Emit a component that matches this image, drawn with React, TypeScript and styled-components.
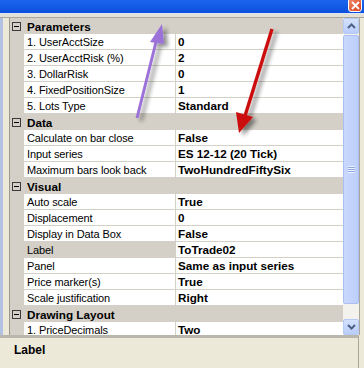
import styled, { createGlobalStyle } from "styled-components";

const GlobalStyle = createGlobalStyle`
	html, body {
		margin: 0;
		padding: 0;
		background: #ece9d8;
	}
	body {
		font-family: "Liberation Sans", Arial, sans-serif;
	}
`;

interface Prop {
	name: string;
	value: string;
	selected?: boolean;
}

interface Category {
	title: string;
	props: Prop[];
}

const categories: Category[] = [
	{
		title: "Parameters",
		props: [
			{ name: "1. UserAcctSize", value: "0" },
			{ name: "2. UserAcctRisk (%)", value: "2" },
			{ name: "3. DollarRisk", value: "0" },
			{ name: "4. FixedPositionSize", value: "1" },
			{ name: "5. Lots Type", value: "Standard" }
		]
	},
	{
		title: "Data",
		props: [
			{ name: "Calculate on bar close", value: "False" },
			{ name: "Input series", value: "ES 12-12 (20 Tick)" },
			{ name: "Maximum bars look back", value: "TwoHundredFiftySix" }
		]
	},
	{
		title: "Visual",
		props: [
			{ name: "Auto scale", value: "True" },
			{ name: "Displacement", value: "0" },
			{ name: "Display in Data Box", value: "False" },
			{ name: "Label", value: "ToTrade02", selected: true },
			{ name: "Panel", value: "Same as input series" },
			{ name: "Price marker(s)", value: "True" },
			{ name: "Scale justification", value: "Right" }
		]
	},
	{
		title: "Drawing Layout",
		props: [{ name: "1. PriceDecimals", value: "Two" }]
	}
];

function App() {
	return (
		<Window>
			<GlobalStyle />
			<TitleBar>
				<CloseButton>
					<svg width="9" height="9" viewBox="0 0 9 9">
						<path d="M1 1 L8 8 M8 1 L1 8" stroke="#fff" strokeWidth="1.8" />
					</svg>
				</CloseButton>
			</TitleBar>
			<TopGap />
			<Content>
				<LeftStrip />
				<Grid>
					{categories.map(cat => (
						<div key={cat.title}>
							<HeaderRow>
								<Gutter>
									<MinusBox />
								</Gutter>
								<HeaderTitle>{cat.title}</HeaderTitle>
							</HeaderRow>
							{cat.props.map(p => (
								<PropRow key={p.name}>
									<Gutter />
									<NameCell selected={!!p.selected}>{p.name}</NameCell>
									<ValueCell>{p.value}</ValueCell>
								</PropRow>
							))}
						</div>
					))}
				</Grid>
				<ScrollBar>
					<ScrollButton>
						<svg width="9" height="6" viewBox="0 0 9 6">
							<path d="M1 5 L4.5 1.5 L8 5" fill="none" stroke="#4d6185" strokeWidth="2" />
						</svg>
					</ScrollButton>
					<Track>
						<Thumb>
							<Grip />
						</Thumb>
					</Track>
					<ScrollButton>
						<svg width="9" height="6" viewBox="0 0 9 6">
							<path d="M1 1 L4.5 4.5 L8 1" fill="none" stroke="#4d6185" strokeWidth="2" />
						</svg>
					</ScrollButton>
				</ScrollBar>
				<RightEdge />
			</Content>
			<Description>
				<DescTitle>Label</DescTitle>
			</Description>
			<Annotations width="364" height="368" viewBox="0 0 364 368">
				<defs>
					<filter id="shadow" x="-50%" y="-50%" width="200%" height="200%">
						<feGaussianBlur in="SourceAlpha" stdDeviation="2" />
						<feOffset dx="4" dy="3" result="off" />
						<feComponentTransfer>
							<feFuncA type="linear" slope="0.45" />
						</feComponentTransfer>
						<feMerge>
							<feMergeNode />
							<feMergeNode in="SourceGraphic" />
						</feMerge>
					</filter>
				</defs>
				<g filter="url(#shadow)">
					<line x1="137" y1="118" x2="157" y2="38" stroke="#9c72d8" strokeWidth="3" />
					<polygon points="162,24 150,42 164,44" fill="#9c72d8" />
				</g>
				<g filter="url(#shadow)">
					<line x1="272" y1="29" x2="245" y2="116" stroke="#cc1010" strokeWidth="3.4" />
					<polygon points="239,133 236,112 253,117" fill="#cc1010" />
				</g>
			</Annotations>
		</Window>
	);
}

const Window = styled.div`
	position: relative;
	width: 364px;
	height: 368px;
	overflow: hidden;
	background: #ece9d8;
	display: flex;
	flex-direction: column;
`;

const TitleBar = styled.div`
	height: 13px;
	flex: none;
	background: linear-gradient(#1c64ec, #0a50dc);
	display: flex;
	justify-content: flex-end;
	align-items: flex-end;
	padding-right: 2px;
`;

const CloseButton = styled.div`
	width: 14px;
	height: 14px;
	margin-bottom: 1px;
	box-sizing: border-box;
	border: 1px solid #fff;
	border-radius: 3px;
	background: linear-gradient(135deg, #f08a68, #d8421e);
	display: flex;
	align-items: center;
	justify-content: center;
`;

const TopGap = styled.div`
	height: 5px;
	flex: none;
	box-sizing: border-box;
	border-top: 1px solid #dde6f7;
	border-bottom: 1px solid #a9a79c;
	background: #e3e1d6;
`;

const Content = styled.div`
	height: 317px;
	flex: none;
	display: flex;
`;

const LeftStrip = styled.div`
	width: 10px;
	flex: none;
	box-sizing: border-box;
	border-left: 3px solid #b3c1e2;
	border-right: 1px solid #9a988e;
	background: #ece9d8;
`;

const Grid = styled.div`
	width: 333px;
	flex: none;
	overflow: hidden;
	background: #fff;
`;

const RowBase = styled.div`
	display: grid;
	grid-template-columns: 14px 152px 167px;
	height: 16px;
	line-height: 14px;
	font-size: 11px;
	color: #000;
`;

const HeaderRow = styled(RowBase)`
	background: #d4d0c8;
`;

const PropRow = styled(RowBase)``;

const Gutter = styled.div`
	background: #d4d0c8;
	position: relative;
`;

const MinusBox = styled.div`
	position: absolute;
	left: 2px;
	top: 4px;
	width: 9px;
	height: 9px;
	box-sizing: border-box;
	border: 1px solid #3a3a3a;
	&::after {
		content: "";
		position: absolute;
		left: 1px;
		top: 3px;
		width: 5px;
		height: 1px;
		background: #000;
	}
`;

const HeaderTitle = styled.div`
	grid-column: 2 / 4;
	padding: 2px 0 0 3px;
	font-weight: 700;
	font-size: 11.7px;
	line-height: 14px;
`;

const NameCell = styled.div<{ selected: boolean }>`
	box-sizing: border-box;
	padding: 1px 0 0 3px;
	border-right: 1px solid #d4d0c8;
	border-bottom: 1px solid #d4d0c8;
	background: ${props => (props.selected ? "#d4d0c8" : "#fff")};
	white-space: nowrap;
	overflow: hidden;
	letter-spacing: -0.1px;
`;

const ValueCell = styled.div`
	box-sizing: border-box;
	padding: 1px 0 0 2px;
	border-bottom: 1px solid #d4d0c8;
	font-weight: 700;
	font-size: 11.7px;
	white-space: nowrap;
	overflow: hidden;
`;

const ScrollBar = styled.div`
	width: 16px;
	flex: none;
	display: flex;
	flex-direction: column;
	background: #f3f2ec;
`;

const ScrollButton = styled.div`
	height: 16px;
	flex: none;
	box-sizing: border-box;
	border: 1px solid #b6c8f4;
	border-radius: 2px;
	background: linear-gradient(#d4e1fd, #b9cdfa);
	display: flex;
	align-items: center;
	justify-content: center;
`;

const Track = styled.div`
	flex: 1;
	padding: 1px 0 15px;
	display: flex;
	flex-direction: column;
`;

const Thumb = styled.div`
	flex: 1;
	box-sizing: border-box;
	border: 1px solid #aabff0;
	border-radius: 2px;
	background: linear-gradient(90deg, #c9d8fd, #bccffb);
	display: flex;
	align-items: center;
	justify-content: center;
`;

const Grip = styled.div`
	width: 7px;
	height: 7px;
	background: repeating-linear-gradient(
		#eef3ff 0,
		#eef3ff 1px,
		#8ca6e6 1px,
		#8ca6e6 2px
	);
`;

const RightEdge = styled.div`
	flex: 1;
	box-sizing: border-box;
	border-left: 1px solid #a9a79c;
	background: #ece9d8;
`;

const Description = styled.div`
	flex: 1;
	box-sizing: border-box;
	margin-right: 5px;
	border-top: 3px solid #b9b7ab;
	border-right: 1px solid #a9a79c;
	padding: 6px 0 0 14px;
	background: #ece9d8;
`;

const DescTitle = styled.div`
	font-weight: 700;
	font-size: 12px;
	line-height: 13px;
`;

const Annotations = styled.svg`
	position: absolute;
	left: 0;
	top: 0;
	pointer-events: none;
`;

export default App;
